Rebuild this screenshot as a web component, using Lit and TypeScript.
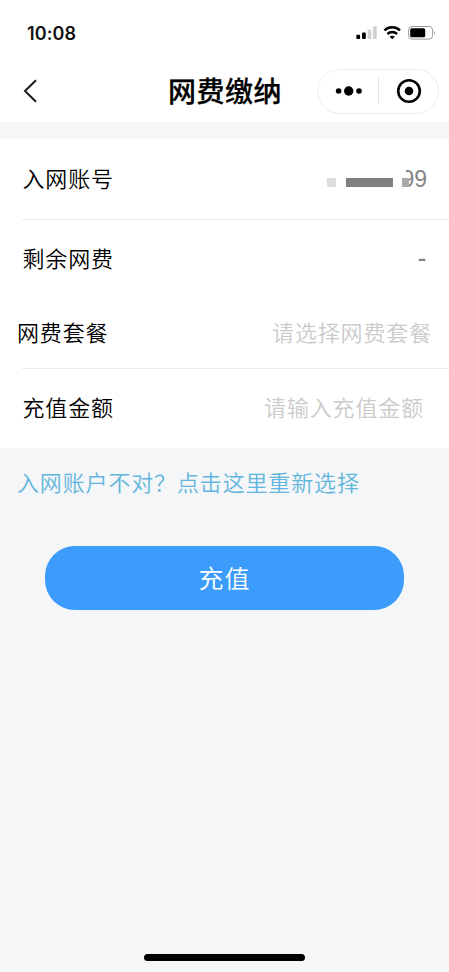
import { LitElement, html, css } from "lit";
import { customElement, property } from "lit/decorators.js";

@customElement("status-bar")
class StatusBar extends LitElement {
  static styles = css`
    :host {
      display: flex;
      justify-content: space-between;
      align-items: center;
      height: 60px;
      padding: 5px 13px 0 27px;
      box-sizing: border-box;
    }
    .time {
      font: 600 18px/22px Inter, sans-serif;
      letter-spacing: 0.1px;
      color: #111;
      padding-top: 2px;
    }
    svg {
      display: block;
    }
  `;
  render() {
    return html`
      <span class="time">10:08</span>
      <svg width="80" height="16" viewBox="356 25 80 16">
        <rect x="356.3" y="34.8" width="3.8" height="4.2" rx="1" />
        <rect x="362" y="32.5" width="3.8" height="6.5" rx="1" />
        <rect x="367.6" y="29.4" width="3.8" height="9.6" rx="1" fill="#d2d2d2" />
        <rect x="373" y="26.3" width="3.8" height="12.7" rx="1" fill="#d2d2d2" />
        <g fill="none" stroke="#000" stroke-width="2.5">
          <path d="M384.4 30.4a11.4 11.4 0 0 1 15.6 0" />
          <path d="M387.4 34a7 7 0 0 1 9.6 0" />
        </g>
        <path d="M389.5 36.6q2.7-1.9 5.4 0l-2.7 2.6z" />
        <rect x="408.6" y="26.5" width="24" height="12.6" rx="3.4" fill="#fff" stroke="#999" />
        <rect x="410.2" y="28.3" width="15" height="9" rx="1.6" />
        <path d="M434.1 30.8q1.7 2 0 4z" fill="#999" />
      </svg>
    `;
  }
}

@customElement("nav-header")
class NavHeader extends LitElement {
  @property() heading = "";
  static styles = css`
    :host {
      display: grid;
      grid-template-columns: 132px 1fr 132px;
      align-items: center;
      height: 62px;
      padding: 0 10px 0 14px;
      box-sizing: border-box;
    }
    .back {
      display: block;
      margin-left: 8px;
    }
    .title {
      justify-self: center;
      margin: -2px 0 0 -3px;
      font: 500 28px/40px "Noto Sans CJK SC", sans-serif;
      letter-spacing: 0.5px;
      white-space: nowrap;
      color: #000;
      -webkit-text-stroke: 0.25px #000;
    }
    .capsule {
      display: flex;
      align-items: center;
      width: 122px;
      height: 45px;
      box-sizing: border-box;
      border: 1px solid #ededed;
      border-radius: 23px;
      justify-self: end;
    }
    .half {
      flex: 1;
      display: flex;
      justify-content: center;
      padding-left: 1px;
    }
    .rule {
      width: 1px;
      height: 26px;
      background: #e2e2e2;
    }
  `;
  render() {
    return html`
      <svg class="back" width="18" height="26" viewBox="0 0 18 26">
        <path d="M14 2.2L3 13L14 23.8" fill="none" stroke="#1a1a1a" stroke-width="2" />
      </svg>
      <h1 class="title">${this.heading}</h1>
      <div class="capsule">
        <div class="half">
          <svg width="28" height="12" viewBox="0 0 28 12">
            <circle cx="4.6" cy="6" r="2.8" />
            <circle cx="14.7" cy="6" r="4.7" />
            <circle cx="25" cy="6" r="2.8" />
          </svg>
        </div>
        <div class="rule"></div>
        <div class="half">
          <svg width="26" height="26" viewBox="0 0 26 26">
            <circle cx="13" cy="13" r="10.8" fill="none" stroke="#000" stroke-width="2.6" />
            <circle cx="13" cy="13" r="4.3" />
          </svg>
        </div>
      </div>
    `;
  }
}

@customElement("masked-number")
class MaskedNumber extends LitElement {
  @property() tail = "";
  static styles = css`
    :host {
      position: relative;
      display: block;
      width: 104px;
      height: 30px;
      text-align: right;
      font: 23px/30px "Liberation Sans", sans-serif;
      letter-spacing: 0;
      color: #858585;
    }
    svg {
      position: absolute;
      inset: 0;
    }
  `;
  render() {
    return html`${this.tail}
      <svg width="104" height="30" viewBox="0 0 104 30">
        <rect width="83" height="30" fill="#fff" />
        <rect x="4" y="14" width="9" height="9" fill="#dcdcdc" />
        <rect x="23" y="14" width="47" height="9" fill="#808080" />
        <rect x="79" y="14" width="7" height="9" fill="#aaa" />
      </svg>`;
  }
}

@customElement("app-root")
class AppRoot extends LitElement {
  static styles = css`
    :host {
      display: flex;
      flex-direction: column;
      height: 972px;
      background: #f4f6f8;
      font: 22px/32px "Noto Sans CJK SC", sans-serif;
      letter-spacing: 0.85px;
      color: #1a1a1a;
      overflow: hidden;
    }
    .top {
      background: #fff;
      margin-bottom: 17px;
    }
    .form {
      background: #fff;
    }
    .row {
      display: flex;
      justify-content: space-between;
      align-items: center;
      box-sizing: border-box;
      height: 80px;
      padding: 0 22px 0 22.5px;
    }
    .label {
      font-weight: 350;
      color: #000;
      margin-top: -4px;
    }
    .row.balance {
      height: 76px;
    }
    .row.balance .label,
    .row.plan .label,
    .row.plan .hint {
      margin-top: -2px;
    }
    .row.plan {
      height: 72px;
      padding: 0 17px 0 17px;
    }
    .row.amount {
      height: 79px;
      padding-right: 25px;
    }
    .row.amount .label,
    .row.amount .hint {
      margin-top: -5px;
    }
    .line {
      height: 1px;
      margin-left: 22px;
      background: #ececec;
    }
    .hint {
      color: #cbcbcb;
      font-weight: 350;
    }
    .dash {
      width: 8px;
      height: 2px;
      margin-right: 1px;
      font: 27px/32px "Liberation Sans", sans-serif;
      display: flex;
      align-items: center;
      justify-content: center;
      letter-spacing: 0;
      color: #858585;
    }
    .switch {
      margin: 17px 17px 0;
      color: #62b5dc;
      font-weight: 350;
    }
    .submit {
      display: flex;
      align-items: center;
      justify-content: center;
      width: 359px;
      height: 64px;
      margin: 49px auto 0;
      padding: 0 0 2px;
      border: 0;
      border-radius: 30px;
      background: #3c9cfb;
      color: #fff;
      font: 350 25px/36px "Noto Sans CJK SC", sans-serif;
      letter-spacing: 1px;
    }
    .home {
      width: 161px;
      height: 7px;
      border-radius: 4px;
      background: #000;
      margin: auto auto 11px;
    }
  `;
  render() {
    return html`
      <div class="top">
        <status-bar></status-bar>
        <nav-header heading="网费缴纳"></nav-header>
      </div>
      <div class="form">
        <div class="row"><span class="label">入网账号</span><masked-number tail="99"></masked-number></div>
        <div class="line"></div>
        <div class="row balance"><span class="label">剩余网费</span><span class="dash">-</span></div>
        <div class="row plan"><span class="label">网费套餐</span><span class="hint">请选择网费套餐</span></div>
        <div class="line"></div>
        <div class="row amount"><span class="label">充值金额</span><span class="hint">请输入充值金额</span></div>
      </div>
      <div class="switch">入网账户不对？点击这里重新选择</div>
      <button class="submit">充值</button>
      <div class="home"></div>
    `;
  }
}
